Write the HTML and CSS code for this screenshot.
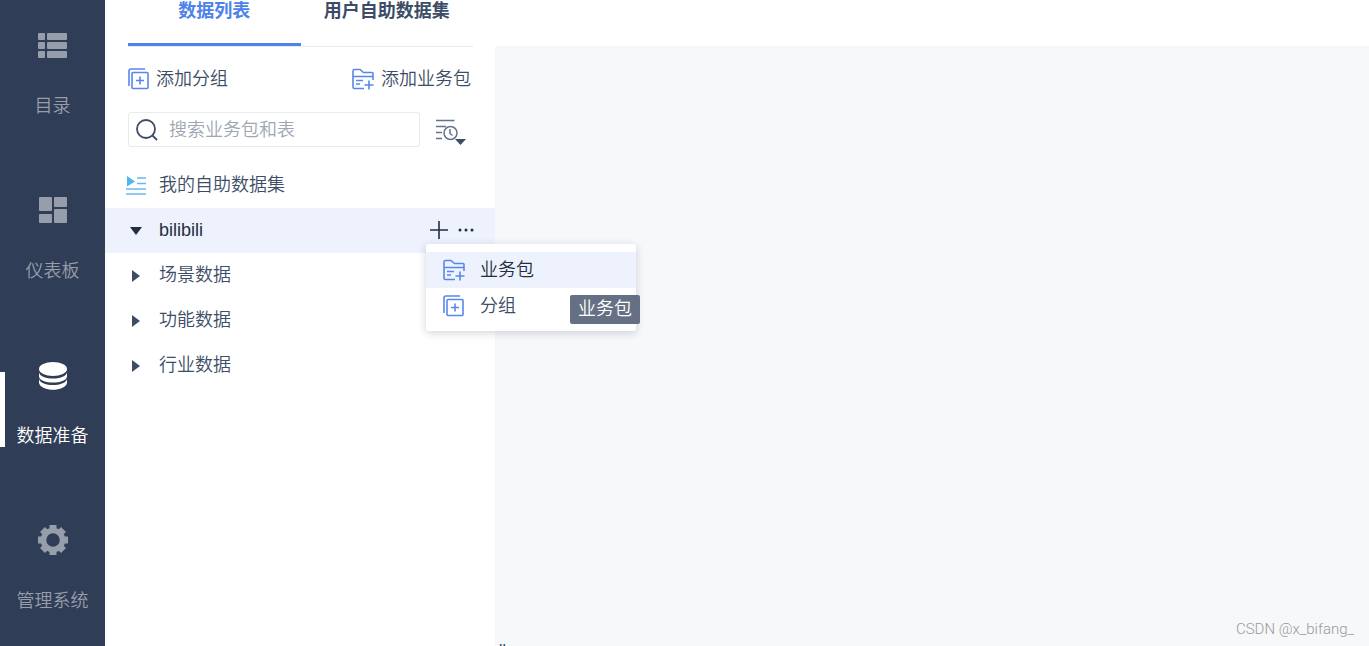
FILE: index.html
```html
<!DOCTYPE html>
<html lang="zh-CN">
<head>
    <meta charset="UTF-8">
    <meta name="viewport" content="width=device-width, initial-scale=1.0">
    <title>数据准备</title>
    <link rel="stylesheet" href="styles.css">
</head>
<body>

<!-- shared icons -->
<svg class="icon-defs" aria-hidden="true">
    <symbol id="icon-group" viewBox="0 0 22 22">
        <path d="M1 18V3a2 2 0 0 1 2-2H17" />
        <rect x="4" y="4.500" width="16" height="16" rx="1" />
        <path d="M12 8.500v8M8 12.500h8" />
    </symbol>
    <symbol id="icon-package" viewBox="0 0 24 22">
        <path d="M13 20.500H3.500a1.500 1.500 0 0 1-1.500-1.500V3a1.500 1.500 0 0 1 1.500-1.500h5.500l3.500 3h8.500a1 1 0 0 1 1 1V12M2 8.500H22M5 12.500h7M5 16h4M18 12.500v9M13.500 17h9" />
    </symbol>
</svg>

<div class="app">
    <nav class="sidebar">
        <a href="#" class="side-item">
            <svg width="30" height="30" viewBox="0 0 30 30" fill="currentColor">
                <rect x="0" y="3" width="7" height="7" rx="1" /><rect x="9" y="3" width="20" height="7" rx="1" />
                <rect x="0" y="12" width="7" height="7" rx="1" /><rect x="9" y="12" width="20" height="7" rx="1" />
                <rect x="0" y="21" width="7" height="7" rx="1" /><rect x="9" y="21" width="20" height="7" rx="1" />
            </svg>
            <span>目录</span>
        </a>
        <a href="#" class="side-item">
            <svg width="30" height="30" viewBox="0 0 30 30" fill="currentColor">
                <rect x="1" y="2" width="13" height="14" rx="1" /><rect x="16" y="2" width="13" height="10" rx="1" />
                <rect x="1" y="19" width="13" height="9" rx="1" /><rect x="16" y="14" width="13" height="14" rx="1" />
            </svg>
            <span>仪表板</span>
        </a>
        <a href="#" class="side-item active">
            <svg width="30" height="30" viewBox="0 0 30 30" fill="currentColor">
                <ellipse cx="15" cy="9" rx="14" ry="7" />
                <path d="M1 12.500c2 8 26 8 28 0v4c-1 8-27 8-28 0z" />
                <path d="M1 19c2 8 26 8 28 0v4c-2 9-26 9-28 0z" />
            </svg>
            <span>数据准备</span>
        </a>
        <a href="#" class="side-item">
            <svg width="30" height="30" viewBox="-15 -15 30 30" fill="none" stroke="currentColor" overflow="visible">
                <circle r="9.500" stroke-width="5.500" />
                <path stroke-width="7" d="M0-15v5M0 10v5M-15 0h5M10 0h5M-10.500-10.500l3 3M7.500 7.500l3 3M10.500-10.500l-3 3M-7.500 7.500l-3 3" />
            </svg>
            <span>管理系统</span>
        </a>
    </nav>

    <section class="panel">
        <div class="tabs">
            <a href="#" class="tab active">数据列表</a>
            <a href="#" class="tab">用户自助数据集</a>
        </div>

        <div class="toolbar">
            <button type="button"><svg class="line-icon" width="22" height="22"><use href="#icon-group" /></svg>添加分组</button>
            <button type="button"><svg class="line-icon" width="24" height="22"><use href="#icon-package" /></svg>添加业务包</button>
        </div>

        <div class="search-row">
            <div class="search-box">
                <svg width="22" height="22" viewBox="0 0 22 22" fill="none" stroke="#3d4d66" stroke-width="1.800">
                    <circle cx="10" cy="10" r="9" /><path d="M16.500 16.500l4.500 4.500" />
                </svg>
                <input type="text" placeholder="搜索业务包和表" aria-label="搜索业务包和表">
            </div>
            <button type="button" class="recent" aria-label="最近">
                <svg width="30" height="26" viewBox="0 0 30 26" fill="none" stroke="#65748a" stroke-width="1.500">
                    <path d="M0 1.500h18.500M0 7.500h10M0 13.500h6M0 19.500h6" />
                    <circle cx="14.500" cy="14" r="6.500" /><path d="M14 10v4.500l2.500 2" />
                    <path d="M19 20h11l-5.500 6z" fill="#3d4d66" stroke="none" />
                </svg>
            </button>
        </div>

        <ul class="tree">
            <li class="tree-row">
                <svg width="20" height="20" viewBox="0 0 20 20">
                    <path d="M1 1l8 5.500-8 5z" fill="#54b5ea" />
                    <path d="M11 3h9M11 8.500h9M0 14h20M0 19h20" stroke="#6bb9ec" stroke-width="1.500" />
                </svg>
                <span>我的自助数据集</span>
            </li>
            <li class="tree-row selected">
                <svg width="20" height="20" viewBox="0 0 20 20"><path d="M4 7h12l-6 8z" fill="#232e40" /></svg>
                <span>bilibili</span>
                <div class="row-actions">
                    <button type="button" aria-label="添加">
                        <svg width="18" height="18" viewBox="0 0 18 18"><path d="M9 0v18M0 9h18" stroke="#232e40" stroke-width="1.600" /></svg>
                    </button>
                    <button type="button" aria-label="更多">
                        <svg width="18" height="18" viewBox="0 0 18 18" fill="#232e40"><circle cx="3" cy="9" r="1.500" /><circle cx="9" cy="9" r="1.500" /><circle cx="15" cy="9" r="1.500" /></svg>
                    </button>
                </div>
                <div class="menu">
                    <button type="button" class="menu-item hover"><svg class="line-icon" width="24" height="22"><use href="#icon-package" /></svg>业务包</button>
                    <button type="button" class="menu-item"><svg class="line-icon" width="24" height="22"><use href="#icon-group" /></svg>分组</button>
                    <div class="tooltip" role="tooltip">业务包</div>
                </div>
            </li>
            <li class="tree-row">
                <svg width="20" height="20" viewBox="0 0 20 20"><path d="M6 5l8 6-8 6z" fill="#3d4d66" /></svg>
                <span>场景数据</span>
            </li>
            <li class="tree-row">
                <svg width="20" height="20" viewBox="0 0 20 20"><path d="M6 5l8 6-8 6z" fill="#3d4d66" /></svg>
                <span>功能数据</span>
            </li>
            <li class="tree-row">
                <svg width="20" height="20" viewBox="0 0 20 20"><path d="M6 5l8 6-8 6z" fill="#3d4d66" /></svg>
                <span>行业数据</span>
            </li>
        </ul>
    </section>

    <main class="content">
        <p class="watermark">CSDN @x_bifang_</p>
        <div class="status">''</div>
    </main>
</div>

</body>
</html>
```
FILE: styles.css
```css
* {
    box-sizing: border-box;
}
body {
    margin: 0;
    font-family: "Liberation Sans", "Noto Sans CJK SC", sans-serif;
    font-size: 18px;
    font-weight: 350;
    line-height: 24px;
    color: #3d4d66;
    background: #fff;
}
button, input {
    font: inherit;
    color: inherit;
    border: 0;
    padding: 0;
    background: none;
}
button {
    cursor: pointer;
}
a {
    color: inherit;
    text-decoration: none;
}
.icon-defs {
    display: none;
}
.line-icon {
    fill: none;
    stroke: #5a86ec;
    stroke-width: 1.6;
}
.app {
    display: flex;
    height: 100vh;
    overflow: hidden;
}

/* left navigation */
.sidebar {
    flex: none;
    width: 105px;
    background: #303d56;
}
.side-item {
    position: relative;
    display: flex;
    flex-direction: column;
    align-items: center;
    gap: 34px;
    height: 165px;
    padding-top: 30px;
    color: #979eab;
}
.side-item.active {
    color: #fff;
}
.side-item.active::before {
    content: "";
    position: absolute;
    left: 0;
    top: 42px;
    width: 5px;
    height: 75px;
    background: #fff;
}

/* data list */
.panel {
    flex: none;
    width: 390px;
}
.tabs {
    display: flex;
    margin: 0 22px 0 23px;
    border-bottom: 1px solid #e8eaed;
}
.tab {
    flex: 1;
    height: 46px;
    line-height: 22px;
    text-align: center;
    font-weight: bold;
    border-bottom: 3px solid transparent;
}
.tab.active {
    color: #4d82eb;
    border-bottom-color: #4d82eb;
}
.toolbar {
    display: flex;
    justify-content: space-between;
    align-items: center;
    height: 65px;
    padding: 0 24px 2px 23px;
}
.toolbar button {
    display: flex;
    align-items: center;
    gap: 6px;
}
.search-row {
    display: flex;
    align-items: center;
    gap: 16px;
    padding: 0 29px 0 23px;
    margin-bottom: 16px;
}
.search-box {
    flex: 1;
    display: flex;
    align-items: center;
    gap: 11px;
    height: 35px;
    padding: 0 7px;
    border: 1px solid #e8eaed;
    border-radius: 3px;
}
.search-box input {
    flex: 1;
    min-width: 0;
    outline: 0;
}
.search-box input::placeholder {
    color: #9ea6b2;
    opacity: 1;
}
.recent {
    display: flex;
    padding-top: 4px;
}
.tree {
    list-style: none;
    margin: 0;
    padding: 0;
}
.tree-row {
    position: relative;
    display: flex;
    align-items: center;
    gap: 13px;
    height: 45px;
    padding: 0 20px 2px 21px;
}
.tree-row.selected {
    color: #232e40;
    background: #edf2fd;
}
.row-actions {
    display: flex;
    gap: 9px;
    margin-left: auto;
}
.row-actions button {
    display: flex;
}

/* popup menu */
.menu {
    position: absolute;
    z-index: 1;
    top: 36px;
    left: 321px;
    width: 210px;
    padding: 8px 0 7px;
    background: #fff;
    border-radius: 3px;
    box-shadow: 0 2px 8px rgba(35, 46, 64, 0.2);
    color: #3d4d66;
}
.menu-item {
    display: flex;
    align-items: center;
    gap: 14px;
    width: 100%;
    height: 36px;
    padding-left: 16px;
}
.menu-item.hover {
    color: #232e40;
    background: #edf2fd;
}
.tooltip {
    position: absolute;
    top: 51px;
    right: -4px;
    padding: 2px 8px 3px;
    border-radius: 2px;
    color: #fff;
    background: #667084;
}

/* work area */
.content {
    flex: 1;
    display: flex;
    flex-direction: column;
    justify-content: flex-end;
    margin-top: 46px;
    background: #f7f8fa;
}
.watermark {
    margin: 0 15px 2px 0;
    text-align: right;
    font-family: Roboto, sans-serif;
    font-size: 15px;
    line-height: 20px;
    color: #999;
}
.status {
    height: 5px;
    padding-left: 4px;
    overflow: hidden;
    line-height: 20px;
}
```
